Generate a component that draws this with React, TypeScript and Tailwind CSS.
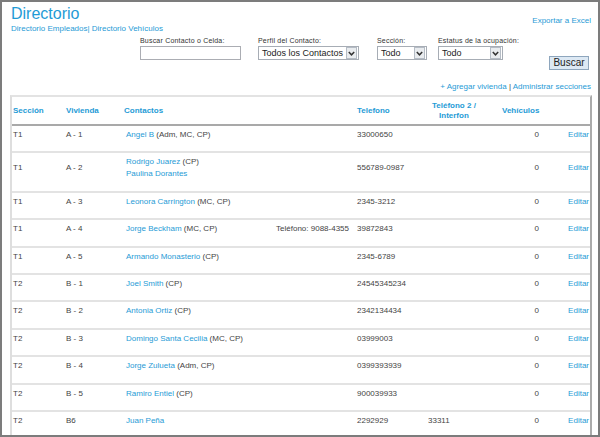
import React from "react";

const blue = "text-[#1f9bd6]";

const Select = ({ value, width }: { value: string; width: string }) => {
  return (
    <div
      className={`${width} h-[14px] border border-[#a7adb5] bg-white flex items-center justify-between`}
    >
      <span className="pl-[3px] text-[9px] leading-[12px] text-[#222]">{value}</span>
      <div className="w-[11px] h-[12px] mr-[1px] border border-[#b5bcc5] bg-[#e9ecef] flex items-center justify-center">
        <svg width="7" height="5" viewBox="0 0 7 5">
          <path d="M0.8 1 L3.5 3.8 L6.2 1" fill="none" stroke="#333" strokeWidth="1.5" />
        </svg>
      </div>
    </div>
  );
};

const Header = () => {
  return (
    <div className="grid grid-cols-[54px_58px_231px_70px_77px_40px_48px] h-[29px] items-center border-b-2 border-[#a9a9a9] font-bold text-[8px] leading-[10px] text-[#1f9bd6]">
      <div className="pl-[1px]">Sección</div>
      <div>Vivienda</div>
      <div>Contactos</div>
      <div className="pl-[2px]">Telefono</div>
      <div className="pl-[7px]">
        <div className="w-fit text-center">
          Teléfono 2 /<br />
          Interfon
        </div>
      </div>
      <div>Vehículos</div>
      <div />
    </div>
  );
};

const Row = ({ r }: { r: (typeof rows)[number] }) => {
  return (
    <div className="grid grid-cols-[54px_58px_231px_70px_77px_40px_48px] items-center border-b-2 border-[#e3e3e3] text-[8px] leading-[12px] text-[#444]">
      <div className="pl-[1px] pt-[3px] pb-[10.4px]">{r.sec}</div>
      <div className="pt-[3px] pb-[10.4px]">{r.viv}</div>
      <div className="pl-[2px] pr-[6px] pt-[3px] pb-[10.4px] flex justify-between">
        <div>
          {r.contacts.map((c) => (
            <div key={c.name}>
              <span className={blue}>{c.name}</span>
              {c.roles && <span> ({c.roles})</span>}
            </div>
          ))}
        </div>
        {r.extra && <div>{r.extra}</div>}
      </div>
      <div className="pl-[2px] pt-[3px] pb-[10.4px]">{r.tel}</div>
      <div className="pl-[3px] pt-[3px] pb-[10.4px]">{r.tel2}</div>
      <div className="text-right pr-[3px] pt-[3px] pb-[10.4px]">0</div>
      <div className={`text-right pr-[1px] pt-[3px] pb-[10.4px] ${blue}`}>Editar</div>
    </div>
  );
};

const App = () => {
  return (
    <div className="w-[600px] h-[437px] overflow-hidden border-2 border-[#7c7c7c] bg-white font-['Liberation_Sans',Arial,sans-serif]">
      <div className="flex justify-between pl-[9px] pr-[7px] pt-[3px]">
        <div>
          <h1 className={`text-[16px] leading-[18px] ${blue}`}>Directorio</h1>
          <div className={`mt-[1px] text-[8px] leading-[10px] ${blue}`}>
            Directorio Empleados| Directorio Vehículos
          </div>
        </div>
        <div className={`mt-[11px] text-[8px] leading-[10px] ${blue}`}>Exportar a Excel</div>
      </div>

      <div className="flex items-start pl-[138px] pr-[9px] mt-[3px]">
        <div className="w-[101px]">
          <div className="text-[7px] leading-[8px] text-[#333] tracking-[0.2px] mb-[1px]">
            Buscar Contacto o Celda:
          </div>
          <div className="h-[14px] border border-[#abadb3] bg-white" />
        </div>
        <div className="ml-[17px]">
          <div className="text-[7px] leading-[8px] text-[#333] tracking-[0.2px] mb-[1px]">
            Perfil del Contacto:
          </div>
          <Select value="Todos los Contactos" width="w-[101px]" />
        </div>
        <div className="ml-[18px]">
          <div className="text-[7px] leading-[8px] text-[#333] tracking-[0.2px] mb-[1px]">
            Sección:
          </div>
          <Select value="Todo" width="w-[50px]" />
        </div>
        <div className="ml-[11px]">
          <div className="text-[7px] leading-[8px] text-[#333] tracking-[0.2px] mb-[1px]">
            Estatus de la ocupación:
          </div>
          <Select value="Todo" width="w-[65px]" />
        </div>
        <button className="ml-auto mt-[19px] w-[40px] h-[14px] border border-[#8ea6bd] bg-[#dde9f4] text-[10px] leading-[12px] text-[#222]">
          Buscar
        </button>
      </div>

      <div className={`mt-[12px] pr-[7px] text-right text-[8px] leading-[10px] ${blue}`}>
        + Agregar vivienda <span className="text-[#444]">|</span> Administrar secciones
      </div>

      <div className="ml-[8px] mt-[3px] w-[582px] border-t-2 border-l-2 border-r-2 border-t-[#e3e3e3] border-l-[#dedede] border-r-[#ababab]">
        <Header />
        {rows.map((r) => (
          <Row key={r.viv} r={r} />
        ))}
      </div>
    </div>
  );
};

export default App;

const rows: {
  sec: string;
  viv: string;
  contacts: { name: string; roles?: string }[];
  extra?: string;
  tel: string;
  tel2?: string;
}[] = [
  { sec: "T1", viv: "A - 1", contacts: [{ name: "Angel B", roles: "Adm, MC, CP" }], tel: "33000650" },
  {
    sec: "T1",
    viv: "A - 2",
    contacts: [{ name: "Rodrigo Juarez", roles: "CP" }, { name: "Paulina Dorantes" }],
    tel: "556789-0987",
  },
  { sec: "T1", viv: "A - 3", contacts: [{ name: "Leonora Carrington", roles: "MC, CP" }], tel: "2345-3212" },
  {
    sec: "T1",
    viv: "A - 4",
    contacts: [{ name: "Jorge Beckham", roles: "MC, CP" }],
    extra: "Teléfono: 9088-4355",
    tel: "39872843",
  },
  { sec: "T1", viv: "A - 5", contacts: [{ name: "Armando Monasterio", roles: "CP" }], tel: "2345-6789" },
  { sec: "T2", viv: "B - 1", contacts: [{ name: "Joel Smith", roles: "CP" }], tel: "24545345234" },
  { sec: "T2", viv: "B - 2", contacts: [{ name: "Antonia Ortiz", roles: "CP" }], tel: "2342134434" },
  { sec: "T2", viv: "B - 3", contacts: [{ name: "Domingo Santa Cecilia", roles: "MC, CP" }], tel: "03999003" },
  { sec: "T2", viv: "B - 4", contacts: [{ name: "Jorge Zulueta", roles: "Adm, CP" }], tel: "0399393939" },
  { sec: "T2", viv: "B - 5", contacts: [{ name: "Ramiro Entiel", roles: "CP" }], tel: "900039933" },
  { sec: "T2", viv: "B6", contacts: [{ name: "Juan Peña" }], tel: "2292929", tel2: "33311" },
];
